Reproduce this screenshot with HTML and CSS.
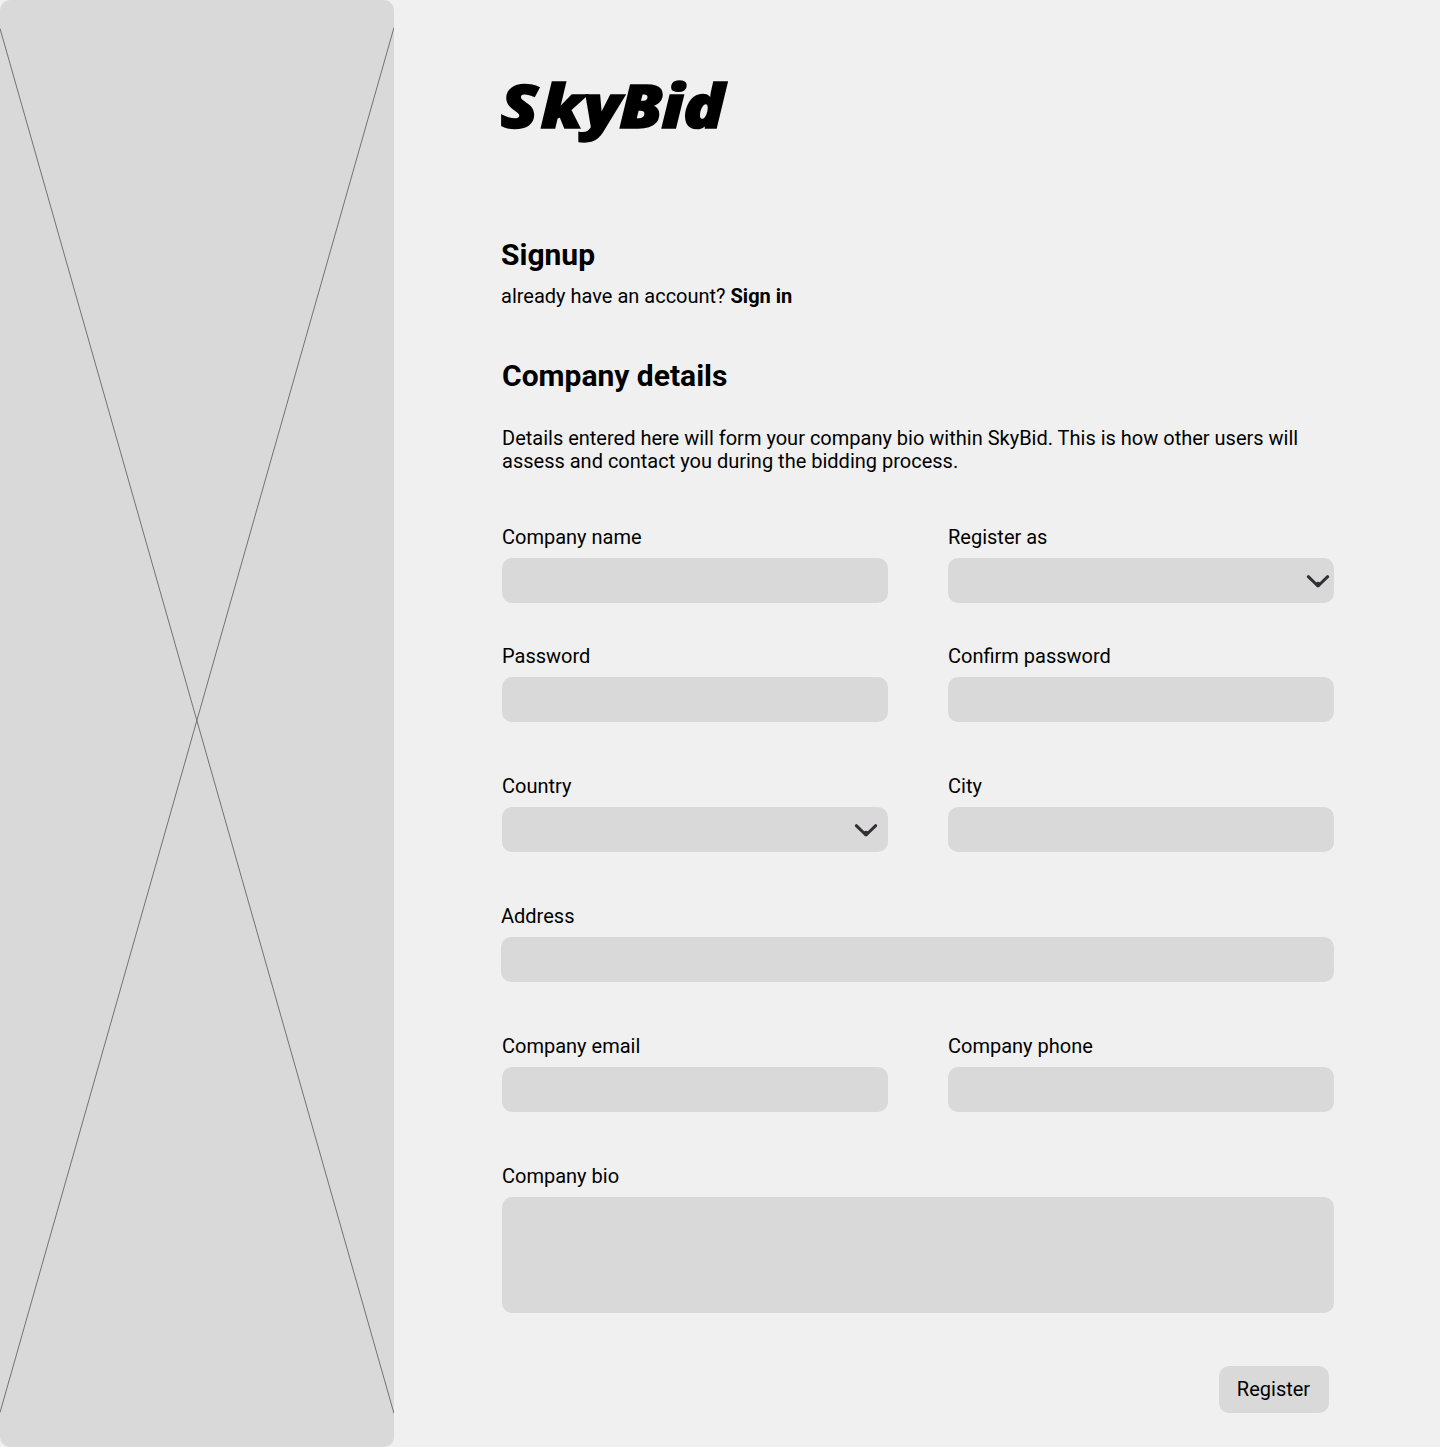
FILE: index.html
```html
<!DOCTYPE html>
<html lang="en">
<head>
<meta charset="utf-8">
<title>SkyBid – Signup</title>
<link rel="stylesheet" href="styles.css">
</head>
<body>
<div class="page">
  <aside class="cover">
    <svg width="394" height="1447" viewBox="0 0 394 1447" aria-hidden="true">
      <path d="M0 28.500L394 1413.500M394 27.500L0 1412.500" fill="none" stroke="#666" stroke-width="0.9"/>
    </svg>
  </aside>
  <main class="content">
    <svg class="logo" width="240" height="80" viewBox="0 0 240 80" role="img" aria-label="SkyBid">
      <text class="logo-text" transform="scale(1.13 1)" x="0.500 36 74 105.500 143 162" y="57.500">SkyBid</text>
    </svg>
    <h1 class="title signup-title">Signup</h1>
    <p class="signin">already have an account? <a class="signin-link">Sign in</a></p>
    <h2 class="title section-title">Company details</h2>
    <p class="intro">Details entered here will form your company bio within SkyBid. This is how other users will<br>assess and contact you during the bidding process.</p>
    <form class="form">
      <div class="row">
        <div class="field"><span class="label">Company name</span><div class="control"></div></div>
        <div class="field"><span class="label">Register as</span><div class="control select edge">
          <svg width="24" height="16" viewBox="0 0 24 16"><path class="chevron" d="M2.300 3.700L12 13L21.700 3.700"/><circle class="dot" cx="12" cy="11.300" r="2.500"/></svg></div></div>
      </div>
      <div class="row spaced">
        <div class="field"><span class="label">Password</span><div class="control"></div></div>
        <div class="field"><span class="label">Confirm password</span><div class="control"></div></div>
      </div>
      <div class="row spaced">
        <div class="field"><span class="label">Country</span><div class="control select">
          <svg width="24" height="16" viewBox="0 0 24 16"><path class="chevron" d="M2.300 3.700L12 13L21.700 3.700"/><circle class="dot" cx="12" cy="11.300" r="2.500"/></svg></div></div>
        <div class="field"><span class="label">City</span><div class="control"></div></div>
      </div>
      <div class="row spaced wide">
        <div class="field"><span class="label">Address</span><div class="control"></div></div>
      </div>
      <div class="row spaced">
        <div class="field"><span class="label">Company email</span><div class="control"></div></div>
        <div class="field"><span class="label">Company phone</span><div class="control"></div></div>
      </div>
      <div class="row">
        <div class="field"><span class="label">Company bio</span><div class="control bio"></div></div>
      </div>
      <button class="submit" type="button">Register</button>
    </form>
  </main>
</div>
</body>
</html>
```

FILE: styles.css
```css
* { box-sizing: border-box; }
body {
  margin: 0;
  background: #f0f0f0;
  color: #000;
  font: 20px/23px Roboto, sans-serif;
}
.page { display: flex; height: 1447px; }
.cover {
  width: 394px;
  flex: none;
  background: #d9d9d9;
  border-radius: 10px;
  overflow: hidden;
}
.cover svg { display: block; }
.content {
  width: 940px;
  padding: 70px 0 0 108px;
}
.logo { display: block; margin-left: -2px; overflow: visible; }
.logo-text {
  font: italic 900 61px "Noto Sans", sans-serif;
  stroke: #000;
  stroke-width: 1.500px;
}
.title { font-size: 30px; line-height: 35px; font-weight: 700; margin: 0; }
.signup-title { margin: 87px 0 0 -1px; }
.signin { margin: 13px 0 0 -1px; }
.signin-link { font-weight: 700; }
.section-title { margin-top: 50px; }
.intro { margin: 34px 0 0; white-space: nowrap; }
.form { margin-top: 53px; display: flex; flex-direction: column; }
.row { display: flex; gap: 60px; margin-bottom: 42px; }
.row.spaced { margin-bottom: 53px; }
.row.wide { margin-left: -1px; }
.field { flex: 1; }
.label { display: block; margin-bottom: 9px; }
.control { height: 45px; border-radius: 10px; background: #d9d9d9; }
.control.bio { height: 116px; }
.select { display: flex; justify-content: flex-end; align-items: center; padding-right: 10px; }
.select.edge { padding-right: 4px; }
.chevron { fill: none; stroke: #332f33; stroke-width: 3; stroke-linecap: round; stroke-linejoin: round; }
.dot { fill: #332f33; }
.submit {
  align-self: flex-end;
  width: 110px;
  height: 47px;
  margin: 11px 5px 0 0;
  padding: 0 1px 0 0;
  border: 0;
  border-radius: 10px;
  background: #d9d9d9;
  color: #000;
  font: inherit;
}
```
